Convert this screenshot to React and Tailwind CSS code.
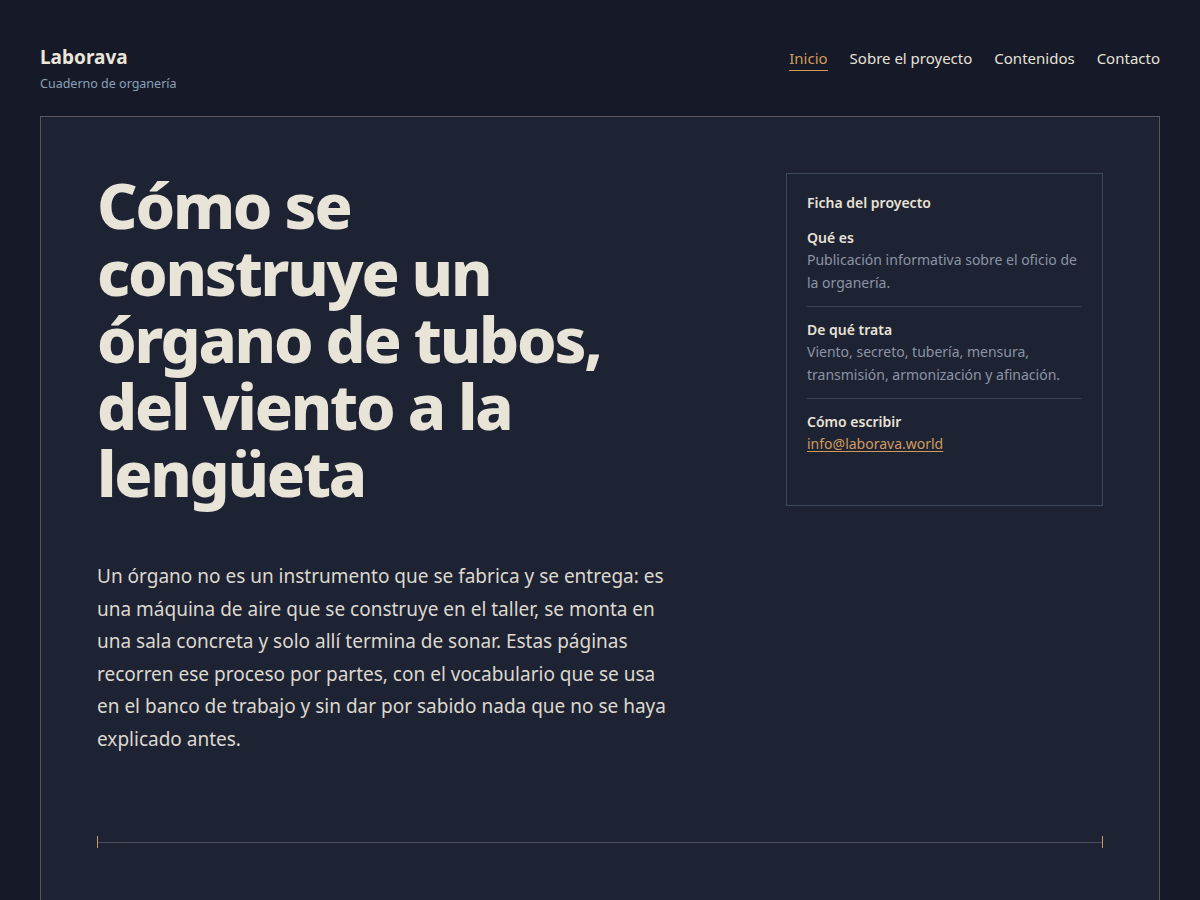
export default function App() {
  return (
    <div className="min-h-[900px] bg-[#161a28] text-[#e8e2d6]" style={{ fontFamily: '"Noto Sans", "Open Sans", sans-serif' }}>
      <div className="px-10 pt-[44px]">
        <header className="flex items-start justify-between">
          <div>
            <div className="text-[19px] font-bold leading-[26px] text-[#ebe5da]">Laborava</div>
            <div className="mt-[6px] text-[12.5px] leading-[16px] text-[#8aa1b8]">Cuaderno de organería</div>
          </div>
          <nav className="flex gap-[22px] pt-[3px] text-[15px] leading-[22px] text-[#e6e1d8]">
            <a className="border-b border-[#d09a5c] pb-[1px] text-[#d09a5c]">Inicio</a>
            <a>Sobre el proyecto</a>
            <a>Contenidos</a>
            <a>Contacto</a>
          </nav>
        </header>

        <main className="mt-[24px] border border-[#5b5659] border-b-0 bg-[#1e2334] px-14 pt-14 pb-[56px]">
          <div className="grid grid-cols-[1fr_317px] gap-10">
            <div>
              <h1 className="-mt-[2px] max-w-[540px] text-[63px] font-extrabold leading-[67px] tracking-[-2.2px] text-[#e9e4d8]">
                Cómo se construye un órgano de tubos, del viento a la lengüeta
              </h1>
              <p className="mt-[54px] max-w-[580px] text-[19px] leading-[32.5px] text-[#ddd8ce]">
                Un órgano no es un instrumento que se fabrica y se entrega: es una máquina de aire que se construye en el taller, se monta en una sala concreta y solo allí termina de sonar. Estas páginas recorren ese proceso por partes, con el vocabulario que se usa en el banco de trabajo y sin dar por sabido nada que no se haya explicado antes.
              </p>
            </div>
            <aside className="self-start h-[333px] border border-[#3c4a5e] px-5 pt-[19px] text-[14px]">
              <div className="font-semibold leading-[20px] text-[#e8e2d6]">Ficha del proyecto</div>
              <div className="mt-[15px]">
                <div className="font-semibold leading-[20px] text-[#e8e2d6]">Qué es</div>
                <div className="leading-[23px] text-[#8c93a3]">Publicación informativa sobre el oficio de la organería.</div>
              </div>
              <div className="mt-[12px] border-t border-[#39404f] pt-[13px]">
                <div className="font-semibold leading-[20px] text-[#e8e2d6]">De qué trata</div>
                <div className="leading-[23px] text-[#8c93a3]">Viento, secreto, tubería, mensura, transmisión, armonización y afinación.</div>
              </div>
              <div className="mt-[12px] border-t border-[#39404f] pt-[13px]">
                <div className="font-semibold leading-[20px] text-[#e8e2d6]">Cómo escribir</div>
                <a className="leading-[23px] text-[#d09a5c] underline underline-offset-2">info@laborava.world</a>
              </div>
            </aside>
          </div>

          <div className="mt-[81px] flex items-center">
            <span className="h-3 w-px bg-[#c99a62]" />
            <span className="h-px flex-1 bg-[#4a4e5c]" />
            <span className="h-3 w-px bg-[#c99a62]" />
          </div>
        </main>
      </div>
    </div>
  );
}
